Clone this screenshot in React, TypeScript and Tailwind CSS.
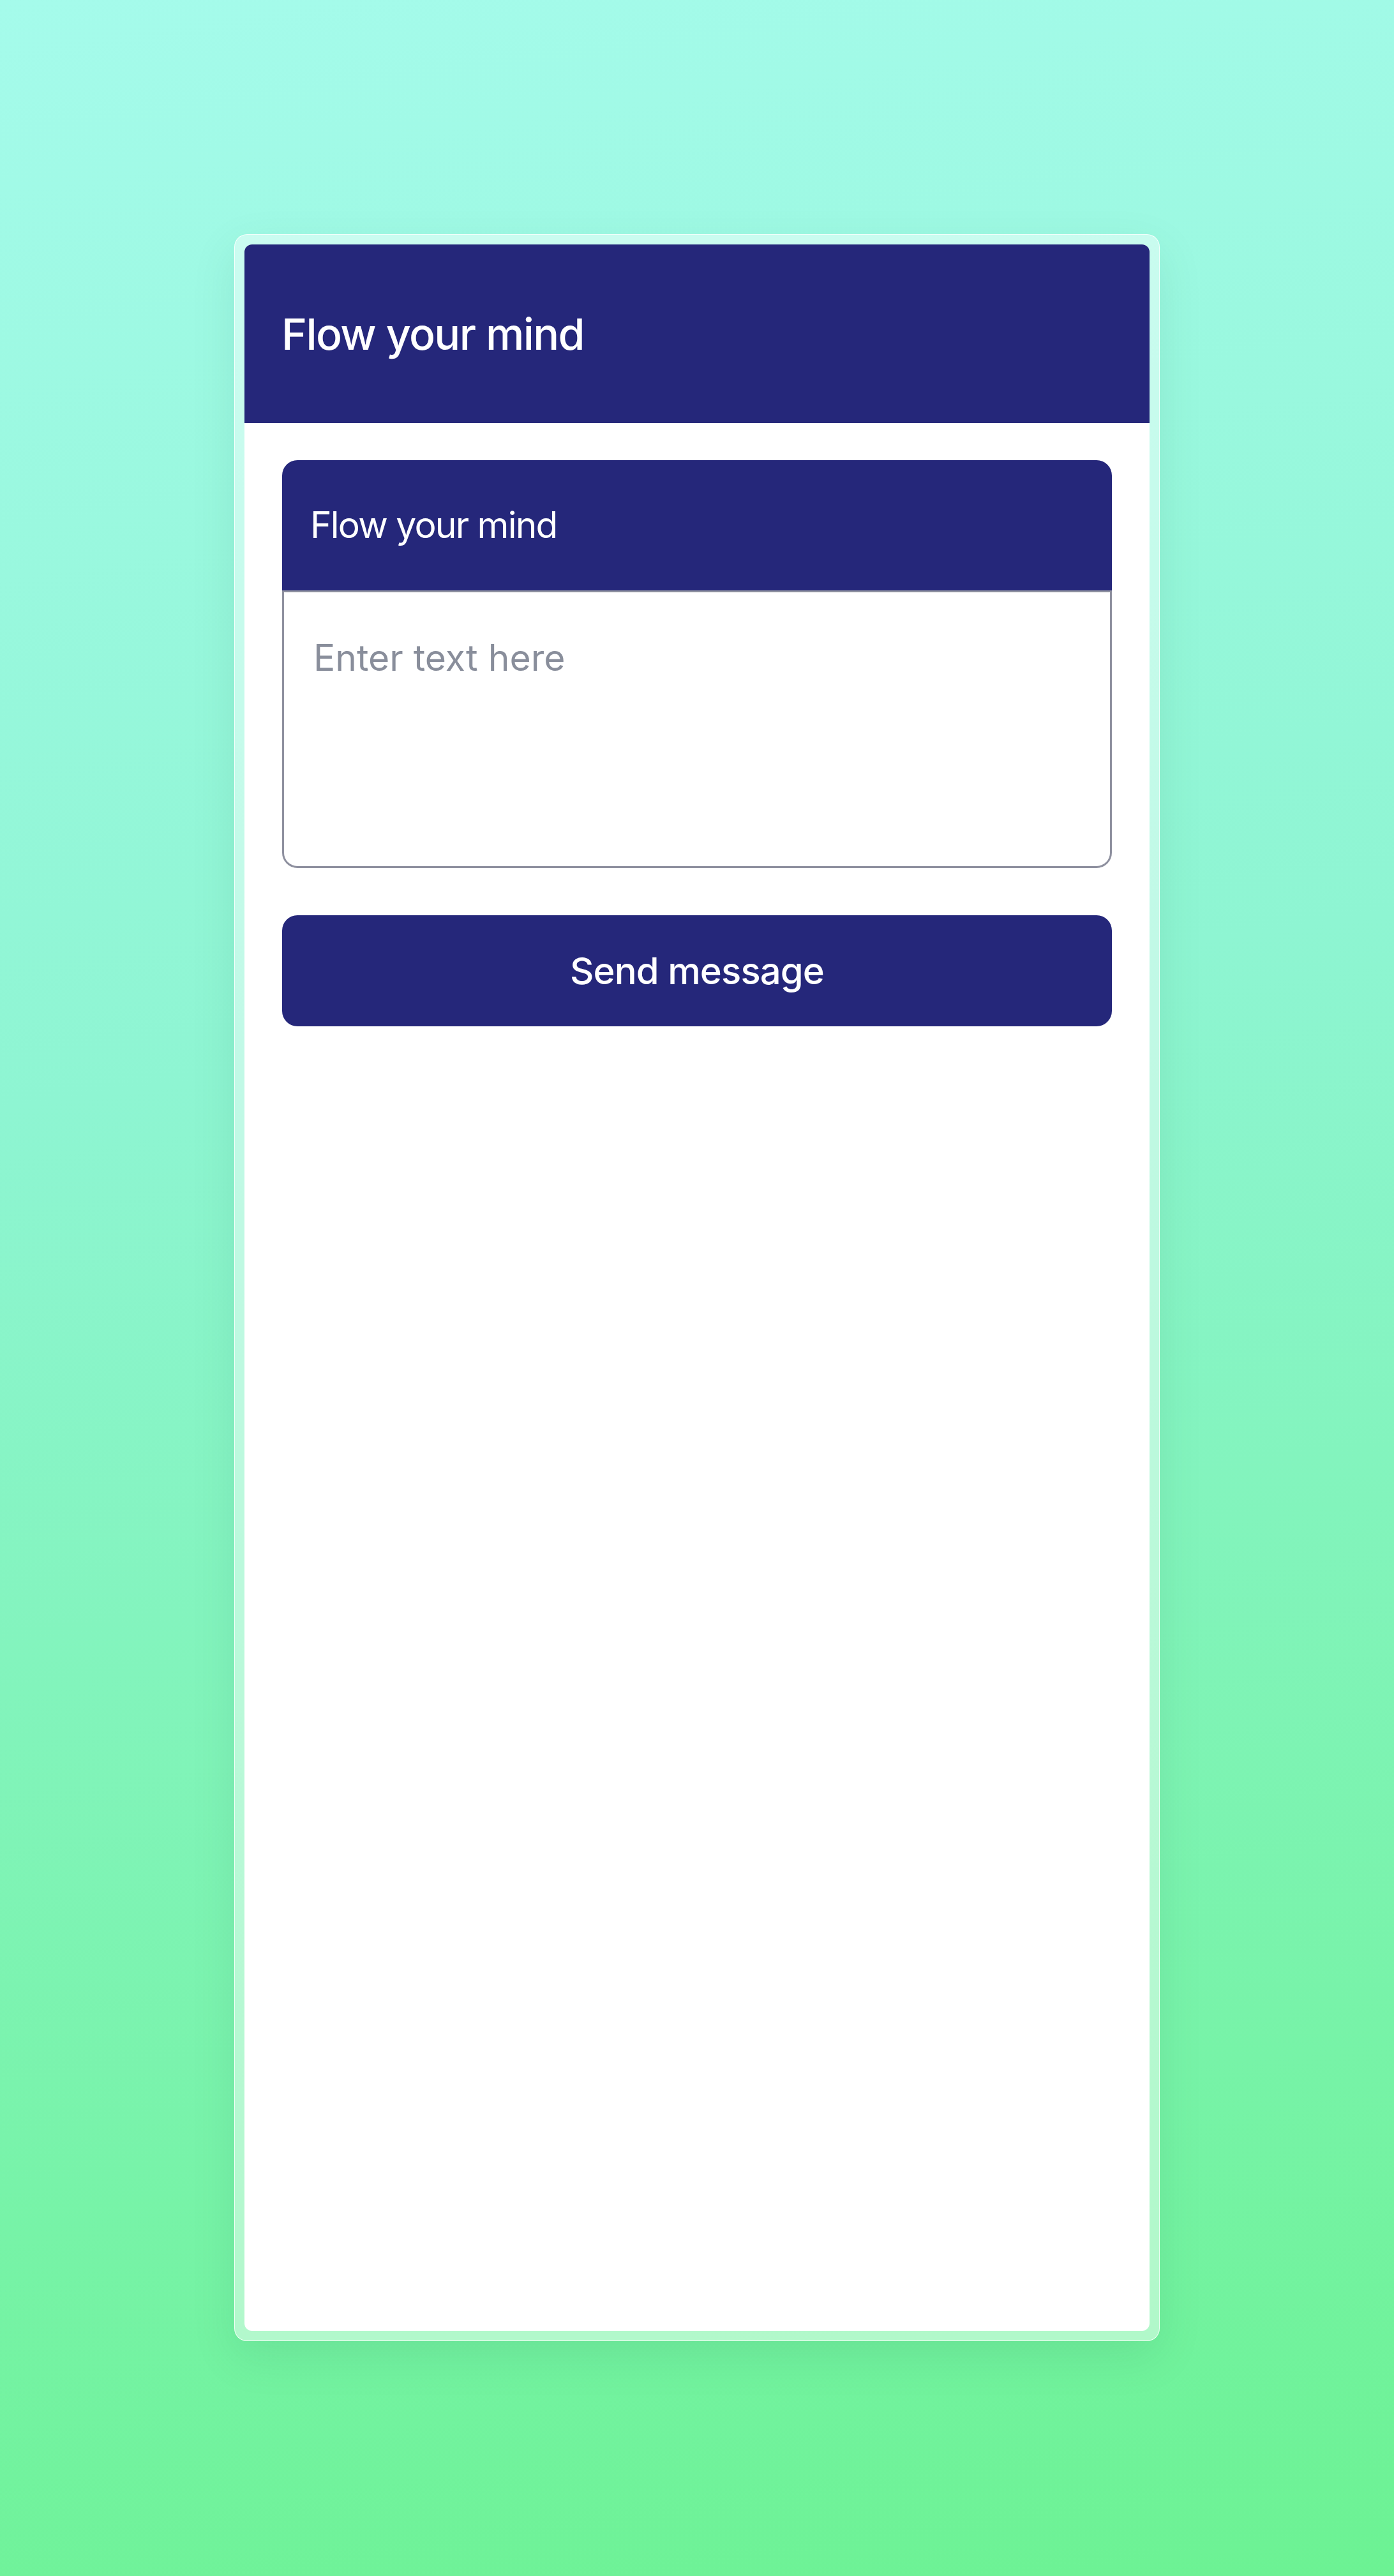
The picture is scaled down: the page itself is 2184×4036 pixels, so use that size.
import React, { useState } from 'react';

const font = { fontFamily: 'Inter, "Noto Sans", sans-serif' };

export default function App() {
  const [text, setText] = useState('');

  return (
    <div
      className="min-h-[4036px] w-full flex justify-center pt-[367px] bg-[linear-gradient(172deg,#a5fbeb_0%,#8ef5d2_40%,#6cf293_100%)]"
      style={font}
    >
      {/* glass frame */}
      <div className="w-[1450px] h-[3301px] p-[15px] rounded-[20px] border border-white/80 bg-white/45 shadow-[0_24px_70px_rgba(20,90,60,0.10)]">
        <div className="h-full bg-white rounded-[12px] overflow-hidden flex flex-col">
          {/* top bar */}
          <div className="h-[280px] shrink-0 bg-[#25277a] flex items-center px-[58px]">
            <h1 className="text-white text-[68px] font-medium tracking-[-1.6px]">
              Flow your mind
            </h1>
          </div>

          {/* form */}
          <div className="px-[59px] pt-[58px] flex flex-col">
            <div className="flex flex-col">
              <div className="h-[204px] bg-[#25277a] rounded-t-[24px] flex items-center px-[44px]">
                <span className="text-white text-[57px] font-normal tracking-[-1.8px]">
                  Flow your mind
                </span>
              </div>
              <textarea
                value={text}
                onChange={e => setText(e.target.value)}
                placeholder="Enter text here"
                className="h-[435px] resize-none border-[3px] border-[#8e909f] rounded-b-[24px] px-[46px] pt-[60px] text-[57px] leading-[1.5] text-[#25277a] placeholder:text-[#898e9b] outline-none"
                style={font}
              />
            </div>

            <button className="mt-[74px] h-[174px] w-full bg-[#25277a] rounded-[24px] text-white text-[58px] font-medium tracking-[-0.9px]">
              Send message
            </button>
          </div>
        </div>
      </div>
    </div>
  );
}
